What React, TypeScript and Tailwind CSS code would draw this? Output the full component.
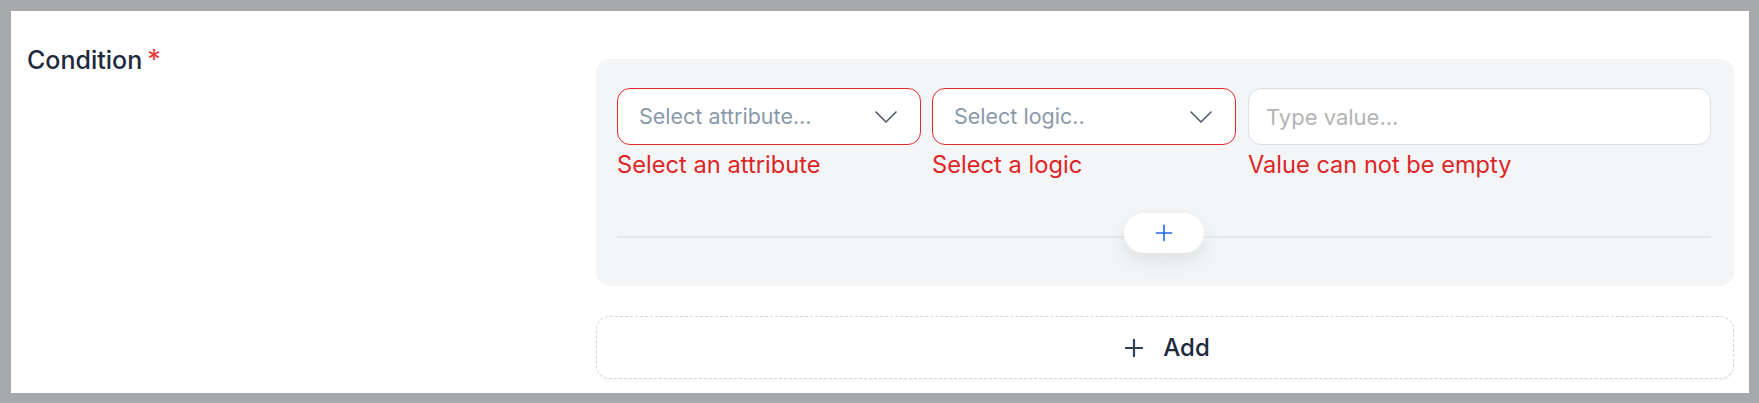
import { Plus } from "lucide-react";

function Chevron() {
  return (
    <svg width="22" height="12" viewBox="0 0 22 12" fill="none" className="text-[#4b5563]">
      <path d="M1 1l10 10L21 1" stroke="currentColor" strokeWidth="1.5" strokeLinecap="round" strokeLinejoin="round" />
    </svg>
  );
}

function SelectBox({ placeholder, error }: { placeholder: string; error: string }) {
  return (
    <div className="w-[304px] flex flex-col">
      <div className="h-[57px] rounded-[13px] border border-[#e02b2b] bg-white flex items-center justify-between pl-[21px] pr-[23px]">
        <span className="text-[21.5px] text-[#8a9aab]">{placeholder}</span>
        <Chevron />
      </div>
      <span className="mt-[5px] text-[23.7px] leading-[30px] text-[#dc2626]">{error}</span>
    </div>
  );
}

export default function App() {
  return (
    <div
      className="w-[1759px] h-[403px] bg-[#a7a8ab] pt-[11px] pl-[11px] pr-[10px] pb-[10px]"
      style={{ fontFamily: "Inter, 'Noto Sans', sans-serif" }}
    >
      <div className="h-full bg-white flex">
        <div className="w-[585px] pl-[16px] pt-[32px]">
          <div className="flex items-start gap-[5px]">
            <span className="text-[25px] leading-[34px] font-medium text-[#1e293b]">Condition</span>
            <span className="text-[27px] leading-[34px] text-[#e53935]">*</span>
          </div>
        </div>

        <div className="flex-1 pr-[15px] pt-[48px] flex flex-col">
          <div className="rounded-[14px] bg-[#f4f5f7] pl-[21px] pr-[23px] pt-[29px] pb-[33px]">
            <div className="flex">
              <SelectBox placeholder="Select attribute..." error="Select an attribute" />
              <div className="ml-[11px]">
                <SelectBox placeholder="Select logic.." error="Select a logic" />
              </div>
              <div className="ml-[12px] flex-1 flex flex-col">
                <input
                  placeholder="Type value..."
                  className="h-[57px] rounded-[13px] border border-[#dadee5] bg-white px-[17px] text-[22px] placeholder:text-[#b4b4b4] outline-none"
                />
                <span className="mt-[5px] text-[23.6px] leading-[30px] text-[#dc2626]">Value can not be empty</span>
              </div>
            </div>

            <div className="mt-[33px] flex items-center">
              <div className="flex-1 h-[2px] bg-[#e4e6ea] mt-[7px]" />
              <button className="w-[80px] h-[40px] rounded-full bg-white flex items-center justify-center shadow-[0_8px_20px_rgba(0,0,0,0.09)]">
                <Plus className="w-[26px] h-[26px] text-[#2563eb]" strokeWidth={1.5} />
              </button>
              <div className="flex-1 h-[2px] bg-[#e4e6ea] mt-[7px]" />
            </div>
          </div>

          <button className="mt-[30px] h-[63px] rounded-[14px] border border-dashed border-[#d4d8de] bg-white flex items-center justify-center gap-[15px] shadow-[0_1px_3px_rgba(0,0,0,0.05)]">
            <Plus className="w-[28px] h-[28px] text-[#334155]" strokeWidth={1.9} />
            <span className="text-[24px] font-medium text-[#1e293b]">Add</span>
          </button>
        </div>
      </div>
    </div>
  );
}
